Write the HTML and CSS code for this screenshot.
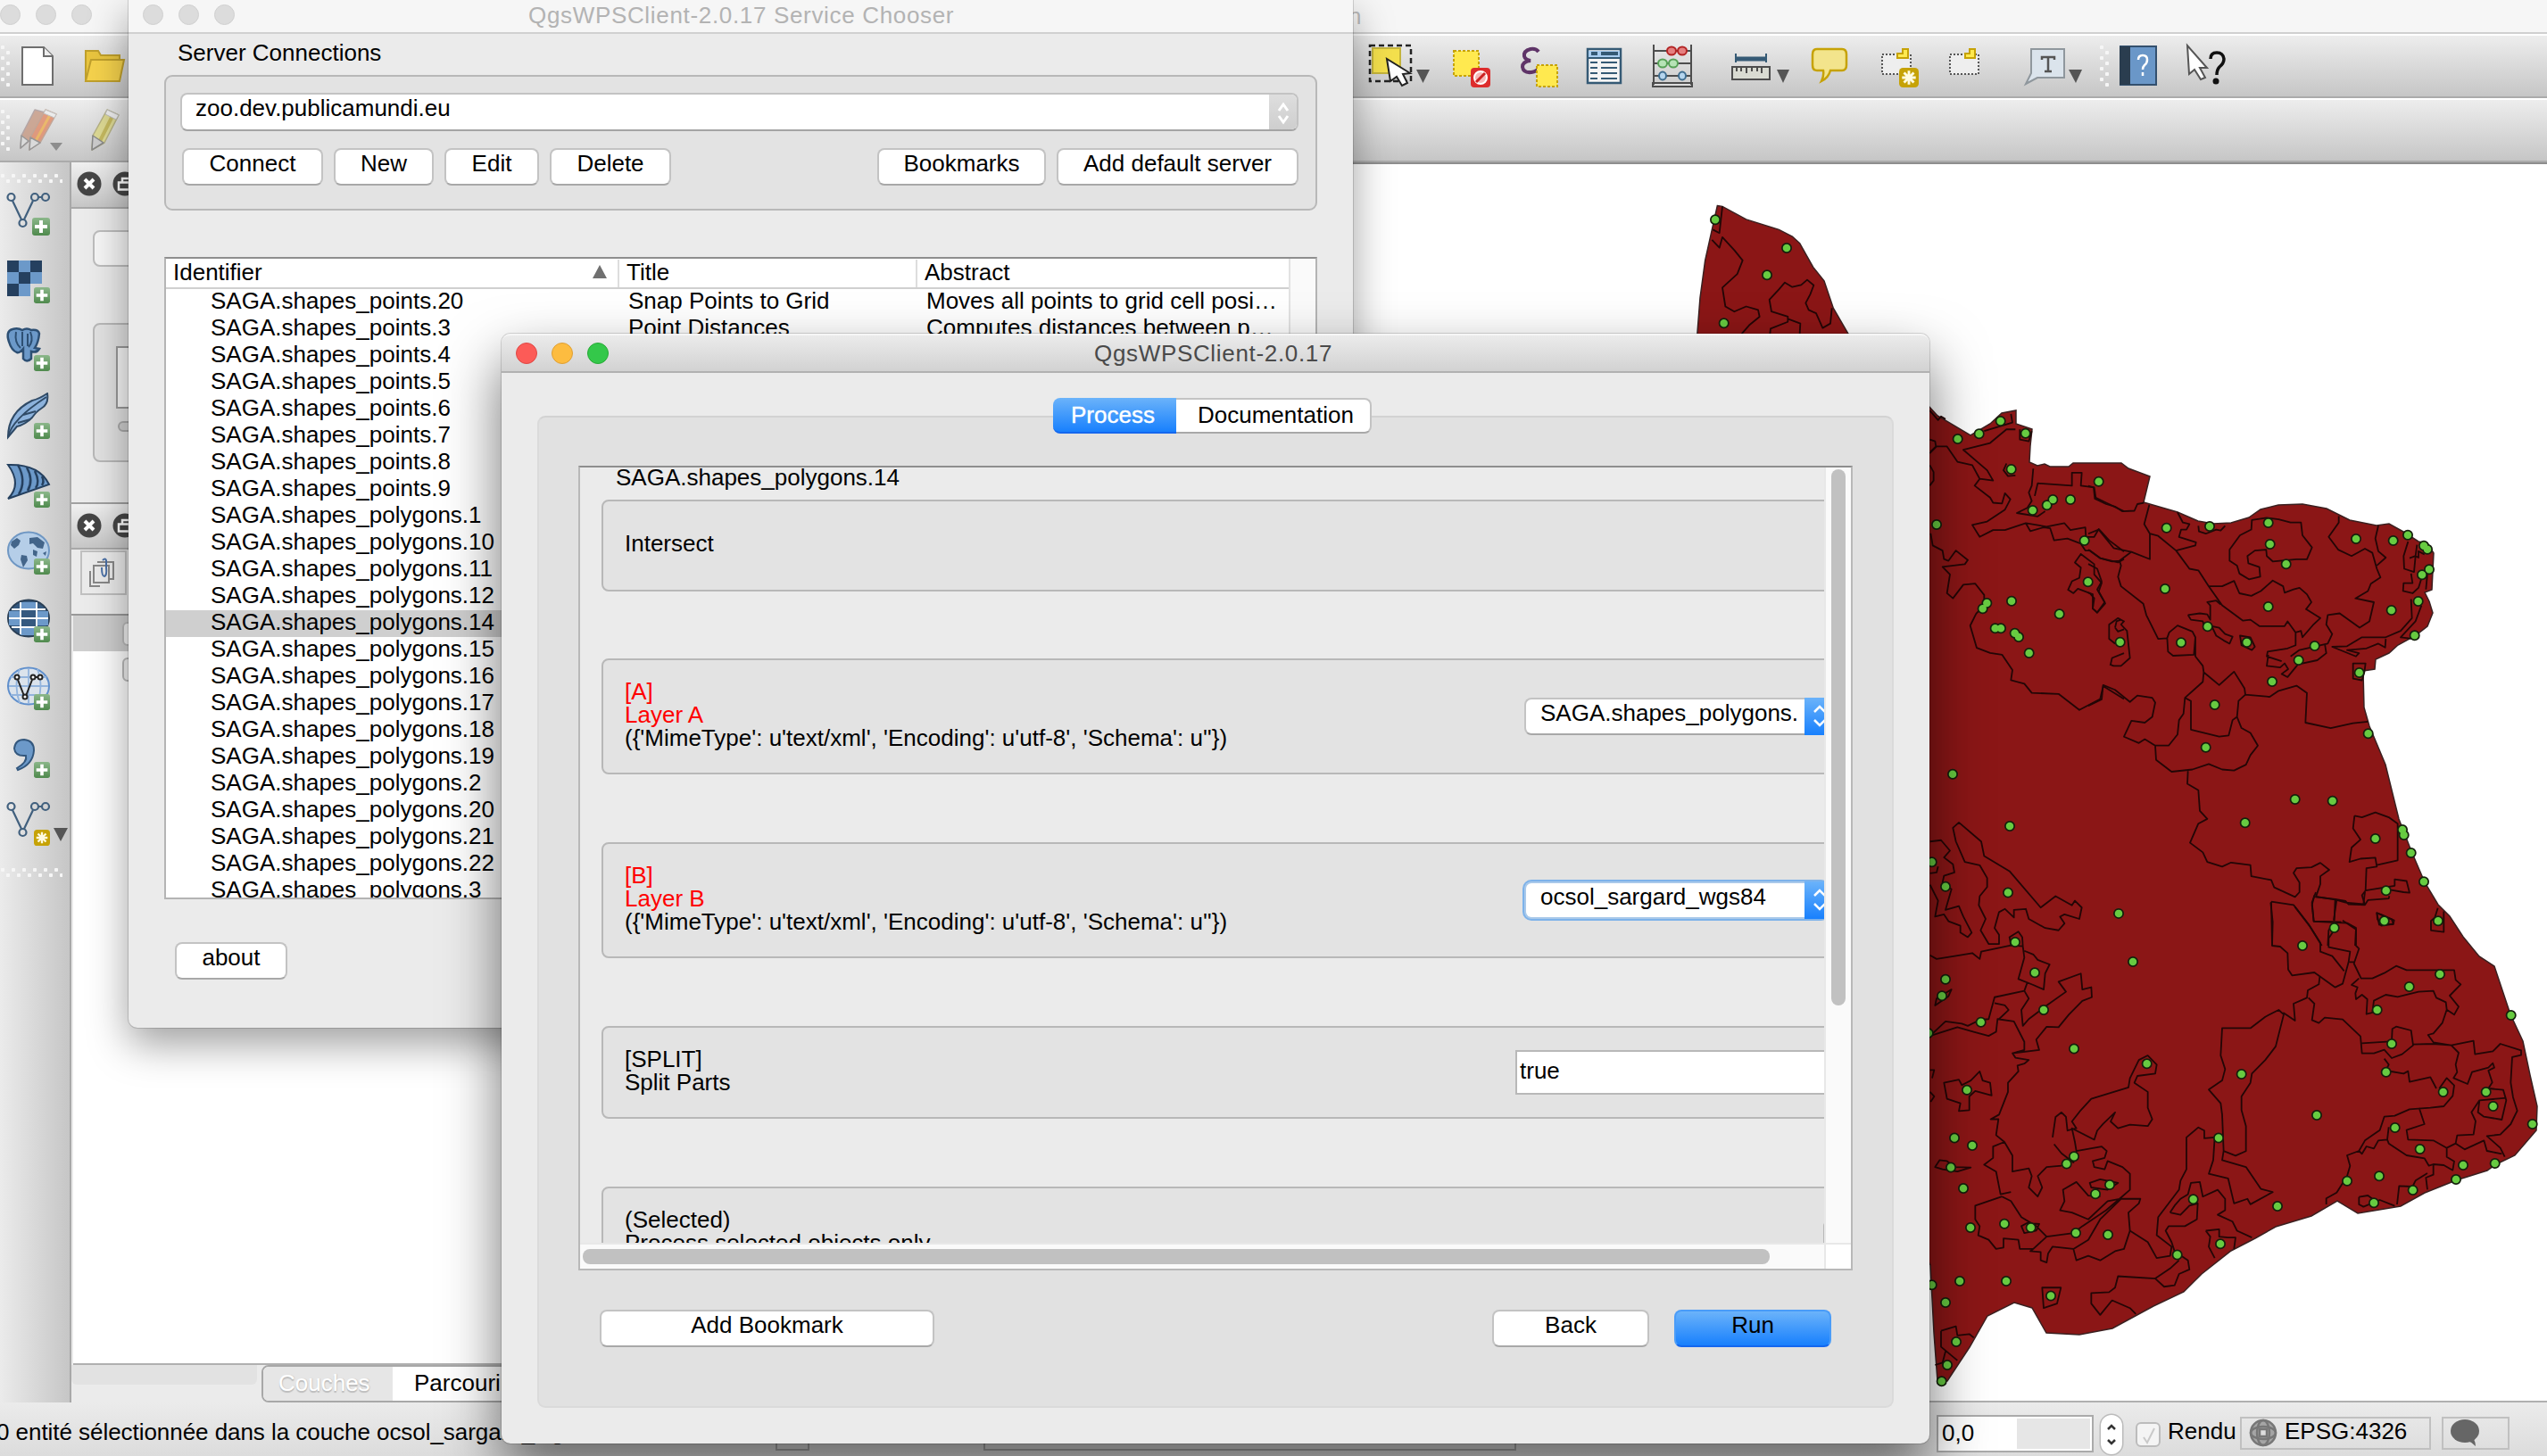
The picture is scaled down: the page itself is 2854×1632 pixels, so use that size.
FILE: index.html
```
<!DOCTYPE html>
<html lang="fr">
<head>
<meta charset="utf-8">
<title>QGIS - QgsWPSClient</title>
<link rel="stylesheet" href="styles.css">
</head>
<body>
<svg class="defs" width="0" height="0">
  <defs>
    <linearGradient id="green" x1="0" y1="0" x2="0" y2="1"><stop offset="0" stop-color="#8bb78a"/><stop offset="1" stop-color="#4f8a4d"/></linearGradient>
    <symbol id="plus" viewBox="0 0 20 20"><rect width="20" height="20" rx="3" fill="url(#green)"/><path d="M10 3v14M3 10h14" stroke="#fff" stroke-width="4"/></symbol>
    <symbol id="star" viewBox="0 0 20 20"><rect width="20" height="20" rx="4" fill="#c6a206"/><path d="M10 3v14M3 10h14M5 5l10 10M15 5l-10 10" stroke="#fffbe0" stroke-width="2.6"/></symbol>
    <symbol id="vee" viewBox="0 0 60 50"><g fill="none" stroke="#41607e" stroke-width="2.2"><circle cx="12.5" cy="9" r="4"/><circle cx="39" cy="9" r="4"/><circle cx="51" cy="9" r="4"/><circle cx="25.500" cy="38" r="4"/><path d="M14 13l10 21M37 13l-10 21M43 9h4"/></g></symbol>
    <symbol id="close" viewBox="0 0 28 28"><circle cx="14" cy="14" r="13.500" fill="#454545"/><path d="M9 9l10 10M19 9l-10 10" stroke="#fff" stroke-width="4"/></symbol>
    <symbol id="float" viewBox="0 0 28 28"><circle cx="14" cy="14" r="13.500" fill="#454545"/><path d="M7 12.500h12v8H7zM11 12V8h10" fill="none" stroke="#fff" stroke-width="2.500"/></symbol>
  </defs>
</svg>

<div class="desktop">
<main class="qgis">
  <header class="titlebar main-title">
    <div class="lights"><i></i><i></i><i></i></div>
    <span class="title">n</span>
  </header>

  <div class="toolbar">
    <span class="grip"></span>
    <svg width="132" height="68" viewBox="12 40 132 68">
      <path d="M25 53h24l10 10v32H25z" fill="#fff" stroke="#6e6e6e" stroke-width="2"/><path d="M49 53v10h10" fill="#eee" stroke="#6e6e6e" stroke-width="2"/>
      <path d="M96 91V57h14l3 5h21v6" fill="#e9c53f" stroke="#c0a02c" stroke-width="2"/><path d="M96 91l6-24h37l-5 24z" fill="#f5d24c" stroke="#c0a02c" stroke-width="2"/>
    </svg>
    <span class="spacer"></span>
    <svg width="80" height="68" viewBox="1530 40 80 68">
      <rect x="1535" y="51" width="46" height="40" fill="none" stroke="#222" stroke-width="2.500" stroke-dasharray="6 4"/><rect x="1538" y="54" width="31" height="28" fill="#f4e04d" stroke="#c4b43c" stroke-width="2"/>
      <path d="M1554 66l4 25 7-5 6 10 6-3-5-10 8-1z" fill="#fff" stroke="#222" stroke-width="2"/><path d="M1587 78h15l-7.500 15z" fill="#555"/>
    </svg>
    <svg width="80" height="68" viewBox="1610 40 80 68">
      <rect x="1629" y="57" width="28" height="28" fill="#ffe94f" stroke="#c6a206" stroke-width="2" stroke-dasharray="3 2"/>
      <rect x="1648" y="76" width="22" height="22" rx="4" fill="#dd2c2c"/><circle cx="1659" cy="87" r="7" fill="#f6b8b8" stroke="#fff" stroke-width="2"/><path d="M1654 92l10-10" stroke="#c22" stroke-width="3"/>
    </svg>
    <svg width="76" height="68" viewBox="1690 40 76 68">
      <path d="M1724 58q-3-4-9-3-8 2-7 8 1 4 7 5-9 1-9 7 1 7 10 6 6-1 9-5" fill="none" stroke="#5f3468" stroke-width="4"/>
      <rect x="1722" y="73" width="23" height="24" fill="#ffe94f" stroke="#c6a206" stroke-width="2" stroke-dasharray="3 2"/>
    </svg>
    <svg width="68" height="68" viewBox="1766 40 68 68">
      <rect x="1779" y="55" width="37" height="38" fill="#f4f4f4" stroke="#355a75" stroke-width="2.500"/><path d="M1780 57h35v7h-35z" fill="#a9cdf0"/><path d="M1783 60h7M1794 60h19" stroke="#355a75" stroke-width="4"/>
      <path d="M1779 65h37" stroke="#355a75" stroke-width="2"/><path d="M1782 70h8m4 0h18M1782 76h8m4 0h18M1782 82h8m4 0h18M1782 88h8m4 0h18" stroke="#355a75" stroke-width="2"/>
    </svg>
    <svg width="86" height="68" viewBox="1834 40 86 68">
      <path d="M1853 50v45M1895 50v45M1853 57h42M1853 71h42M1853 85h42M1852 93h44v4h-44z" fill="#ddd" stroke="#4d4d4d" stroke-width="2"/>
      <g stroke-width="2"><g fill="#e58080" stroke="#b32424"><ellipse cx="1873" cy="57" rx="5" ry="4.500"/><ellipse cx="1885" cy="57" rx="5" ry="4.500"/></g><g fill="#b6e3b6" stroke="#57a157"><ellipse cx="1863" cy="71" rx="5" ry="4.500"/><ellipse cx="1875" cy="71" rx="5" ry="4.500"/></g><g fill="#b5d5ee" stroke="#3f6d8f"><ellipse cx="1863" cy="85" rx="4" ry="4.500"/><ellipse cx="1885" cy="85" rx="4" ry="4.500"/></g></g>
    </svg>
    <svg width="98" height="68" viewBox="1920 40 98 68">
      <path d="M1945 60v10M1979 60v10" stroke="#355a75" stroke-width="2"/><path d="M1945 66h34" stroke="#355a75" stroke-width="5"/>
      <rect x="1941" y="75" width="42" height="14" fill="#d9dbd2" stroke="#4d4d4d" stroke-width="2"/><path d="M1946 75v5m5-5v5m6-5v7m6-7v5m6-5v5m5-5v7" stroke="#4d4d4d" stroke-width="2"/><path d="M1991 78h14l-7 15z" fill="#555"/>
    </svg>
    <svg width="76" height="68" viewBox="2018 40 76 68">
      <path d="M2036 55h28q5 0 5 6v12q0 6-5 6h-13q-2 8-10 12 3-6 2-12h-7q-5 0-5-6V61q0-6 5-6z" fill="#f3e48c" stroke="#c6a206" stroke-width="2.500"/>
    </svg>
    <svg width="74" height="68" viewBox="2094 40 74 68">
      <rect x="2109" y="61" width="32" height="22" fill="#eee" stroke="#555" stroke-width="2" stroke-dasharray="2 2"/><path d="M2132 55h6v10h-12v-5h6z" fill="#ffe94f" stroke="#c6a206" stroke-width="2"/>
      <use href="#star" x="2128" y="76" width="22" height="22"/>
    </svg>
    <svg width="84" height="68" viewBox="2168 40 84 68">
      <rect x="2185" y="61" width="32" height="22" fill="#eee" stroke="#555" stroke-width="2" stroke-dasharray="2 2"/><path d="M2207 55h6v10h-11v-5h5z" fill="#ffe94f" stroke="#c6a206" stroke-width="2"/>
    </svg>
    <svg width="98" height="68" viewBox="2252 40 98 68">
      <path d="M2276 55h37v32h-30l-13 7 6-12z" fill="#dbe4ec" stroke="#8f979d" stroke-width="2"/><path d="M2288 67v-3h14v3M2295 64v15M2291 80h8" fill="none" stroke="#555" stroke-width="2.500"/><path d="M2318 78h15l-7 15z" fill="#555"/>
    </svg>
    <span class="grip inner"></span>
    <svg width="76" height="68" viewBox="2366 40 76 68">
      <path d="M2376 52h40v43h-40z" fill="#6a97c8" stroke="#33506e" stroke-width="2"/><path d="M2375 52h12v43h-12z" fill="#2a3d4f"/><path d="M2396 67q0-5 5-5t5 5q0 4-3 6-2 2-2 5M2401 81v4" fill="none" stroke="#fff" stroke-width="2.500"/>
    </svg>
    <svg width="412" height="68" viewBox="2442 40 412 68">
      <path d="M2451 51l2 32 6-5 7 11 5-2-6-11h8z" fill="#fff" stroke="#555" stroke-width="2"/><path d="M2477 66q0-7 7-7t8 7q0 5-5 9-3 3-3 9" fill="none" stroke="#111" stroke-width="3.500"/><circle cx="2483" cy="91" r="3.500" fill="#111"/>
    </svg>
  </div>

  <div class="toolbar second">
    <span class="grip"></span>
    <svg width="132" height="68" viewBox="12 112 132 68" stroke-linejoin="round">
      <g opacity=".8"><path d="M39 123l11 3-17 32-10 8 1-14z" fill="#c79a84" stroke="#a99" stroke-width="1.500"/><path d="M51 123l12 5-18 32-12 8 1-14z" fill="#e08a68" stroke="#b98" stroke-width="1.500"/><path d="M57 127l-17 31" stroke="#edb050" stroke-width="3"/><path d="M34 154l11 6-12 8zM24 152l8 6-9 8z" fill="#ddd" stroke="#888" stroke-width="1.500"/><path d="M51 123l12 5-2 4-12-5z" fill="#eee" stroke="#bbb"/></g>
      <path d="M56 160h14l-7 9z" fill="#8d8d8d"/>
      <path d="M120 123l13 6-16 31-14 8 1-16z" fill="#ddd994" stroke="#b5b184" stroke-width="1.500"/><path d="M126 130l-14 28" stroke="#c5b95f" stroke-width="4"/><path d="M104 152l12 8-13 8z" fill="#ccc" stroke="#888" stroke-width="1.500"/><path d="M120 123l13 6-3 5-12-6z" fill="#eee" stroke="#bbb"/>
    </svg>
  </div>

  <div class="workspace">
    <aside class="layerbar">
      <span class="hgrip"></span>
      <svg width="78" height="76" viewBox="0 0 78 76"><use href="#vee" width="60" height="50"/><use href="#plus" x="36" y="32" width="20" height="20"/></svg>
      <svg width="78" height="76" viewBox="0 0 78 76"><rect x="8" y="4" width="39" height="26" fill="#6c99c9"/><path d="M8 30h26v14H8z" fill="#6c99c9"/><path d="M8 4h13v13H8zM34 4h13v13H34zM21 17h13v13H21zM8 30h13v14H8z" fill="#25405f"/><use href="#plus" x="38" y="34" width="18" height="18"/></svg>
      <svg width="78" height="76" viewBox="0 0 78 76"><path d="M14 5q6-2 11 1 5-3 10 0 8-1 9 4-1 10-5 16l5 1q-3 5-9 3v8q-5 5-9 0V27q-4 5-7 4-6-2-9-12-4-12 4-14z" fill="#6c99c9" stroke="#2d4f73" stroke-width="2.500"/><path d="M18 8q-2 12 5 18M34 8q4 10-2 17M25 8v16M31 10v14" fill="none" stroke="#2d4f73" stroke-width="2"/><use href="#plus" x="38" y="34" width="18" height="18"/></svg>
      <svg width="78" height="76" viewBox="0 0 78 76"><path d="M9 50q0-28 27-41 8-2 17-8 2 12-7 17-5 3-10 10-8 8-17 10z" fill="#8cb2dc" stroke="#2f4a66" stroke-width="2"/><path d="M9 50q4-20 43-45M20 34l14-4M26 25l14-4" fill="none" stroke="#2f4a66" stroke-width="2"/><use href="#plus" x="38" y="34" width="18" height="18"/></svg>
      <svg width="78" height="76" viewBox="0 0 78 76"><path d="M9 5q35-1 46 22L9 43q16-16 0-38z" fill="#6c99c9" stroke="#25405f" stroke-width="2"/><path d="M20 5q10 18 1 33M30 8q8 14 1 26M39 12q6 12 1 19M47 18q3 6 0 10" fill="none" stroke="#25405f" stroke-width="2.500"/><use href="#plus" x="38" y="35" width="18" height="18"/></svg>
      <svg width="78" height="76" viewBox="0 0 78 76"><ellipse cx="32" cy="25" rx="23" ry="20.500" fill="#b5cee8" stroke="#6f97c3" stroke-width="2"/><path d="M13 15l6-4 4 3-2 5-5 4-4-4zM24 30l6 1 1 5-5 8-3-9zM33 11l9-1 8 6-2 7-6-1-5-5-4 1zM37 24l5 2-1 6-4-2zM27 8l-4 4M48 28l4-2-1 5z" fill="#43658a"/><use href="#plus" x="38" y="34" width="18" height="18"/></svg>
      <svg width="78" height="76" viewBox="0 0 78 76"><ellipse cx="32" cy="25" rx="23" ry="20.500" fill="#35597f" stroke="#2a3f55" stroke-width="2"/><path d="M23 15h18v-8H23zM10 17h12v16H10zM42 17h12v16H42zM23 35h18v9H23z" fill="#6c99c9"/><path d="M13 15h38M10 25h44M13 35h38M23 7v36M41 7v36" stroke="#fff" stroke-width="1.800"/><use href="#plus" x="38" y="34" width="18" height="18"/></svg>
      <svg width="78" height="76" viewBox="0 0 78 76"><ellipse cx="32" cy="25" rx="23" ry="20.500" fill="#dbe3ec" stroke="#5f8fcc" stroke-width="2"/><path d="M12 15h40M10 25h44M12 35h40M32 5v40M22 6q-7 19 0 38M42 6q7 19 0 38" fill="none" stroke="#93b4dd" stroke-width="1.800"/><g fill="#fff" stroke="#222" stroke-width="2"><path d="M20 18l7 18M36 18l-7 18M39 15h4"/><circle cx="19" cy="15" r="2.500"/><circle cx="37" cy="15" r="2.500"/><circle cx="45" cy="15" r="2.500"/><circle cx="28" cy="37" r="2.500"/></g><use href="#plus" x="38" y="34" width="18" height="18"/></svg>
      <svg width="78" height="76" viewBox="0 0 78 76"><path d="M19 41q12-7 10-14-12 1-13-8 1-10 11-10 11 1 11 12-1 16-18 22z" fill="#6c99c9" stroke="#33577d" stroke-width="2"/><use href="#plus" x="38" y="34" width="18" height="18"/></svg>
      <svg width="78" height="76" viewBox="0 0 78 76"><use href="#vee" y="-1" width="60" height="50"/><use href="#star" x="38" y="34" width="18" height="18"/><path d="M60 32h16l-8 15z" fill="#555"/></svg>
      <span class="hgrip"></span>
    </aside>

    <section class="docks">
      <div class="dock-head"><svg width="28" height="28"><use href="#close"/></svg><svg width="28" height="28"><use href="#float"/></svg></div>
      <div class="dock-one"><div class="stub-btn"></div><div class="stub-group"><div class="stub-list"></div><div class="stub-scroll"></div></div></div>
      <div class="dock-head two"><svg width="28" height="28"><use href="#close"/></svg><svg width="28" height="28"><use href="#float"/></svg></div>
      <div class="dock-tools"><div class="toolbtn"><svg width="30" height="34" viewBox="0 0 30 34" fill="none" stroke="#888" stroke-width="2"><path d="M2 15v17h11M6 9h17v19H6zM10 5h18v19h-4"/><path d="M15 11q0 10 3 10 3-1 2-10V3q-1-3-4 0" stroke="#4a6fa5"/></svg></div></div>
      <div class="layers"><div class="layer picked"><i></i></div><div class="layer"><i></i></div></div>
      <div class="dock-tabs"><div class="frame"></div><div class="segment"><span class="off">Couches</span><span>Parcourir</span></div></div>
    </section>

    <section class="canvas">
      <svg width="2134" height="1386" viewBox="720 184 2134 1386">
        <path class="land" d="M2100 420L2162 456L2171 466L2208 488L2230 475L2243 463L2259 460L2259 475L2277 481L2275 500L2274 518L2283 522L2291 520L2297 523L2318 523L2323 519L2377 519L2385 525L2409 534L2402 563L2440 574L2463 584L2480 587L2500 586L2520 580L2533 571L2553 566L2580 565L2607 570L2633 583L2663 589L2677 587L2693 596L2710 607L2720 609L2727 620L2725 661L2717 664L2722 674L2726 687L2720 702L2707 712L2687 723L2677 732L2662 739L2661 750L2648 752L2649 793L2655 814L2673 857L2688 918L2702 954L2717 989L2732 1014L2745 1027L2760 1050L2778 1072L2795 1083L2813 1137L2827 1167L2835 1205L2843 1240L2842 1267L2818 1295L2797 1305L2787 1312L2752 1323L2717 1337L2690 1352L2642 1360L2619 1346L2590 1363L2550 1375L2527 1388L2500 1402L2467 1428L2447 1448L2413 1464L2367 1489L2330 1496L2293 1494L2277 1466L2257 1460L2227 1475L2207 1510L2182 1548L2171 1548L2167 1494L2163 1418L2100 1300Z"/>
        <g transform="translate(1880 200) scale(.33333 .38265)">
          <path class="land" d="M133 80L150 82L230 120L340 150L385 170L410 190L455 260L492 300L523 380L573 455L573 500L63 500L66 450L75 350L92 240L115 150Z"/>
          <path class="line" d="M150 82L140 160L118 150M115 180L140 203L150 172L190 210L218 240L200 280L150 320L160 375L190 390L230 375L270 385L275 405L240 430L215 455M310 455L312 440L370 420L370 405L315 390L308 355L340 325L360 305L385 318L415 312L435 297L457 313L445 340L430 365L440 385L465 395L487 438L513 425L518 380M372 412L412 425L410 455"/>
          <path class="line" d="M847 680L875 708L885 697L900 705M847 765L865 770L868 785L850 800M847 805L870 785L905 785L940 830L990 840L1015 880L1060 885L1040 855L960 795L1050 775L1105 735L1135 735M1030 740L1125 715L1120 690M1150 735L1150 765L1180 770L1190 740M1015 880L998 900L1050 935L1060 950L1090 952L1100 922L1118 940L1100 970L1040 1005L990 1015L1015 1050L1060 1030L1100 1030L1170 1010L1240 1020L1300 1010L1320 1030L1370 1022L1372 1050M1170 1010L1185 1033L1230 1022L1252 1025L1265 1060L1310 1055L1355 1070L1370 1090L1385 1090L1420 1112L1480 1125L1500 1115M1195 850L1190 900L1180 920L1190 945L1175 965L1140 980L1210 990L1235 975M1200 930L1210 893L1325 900L1325 862L1358 862L1355 900L1400 905L1405 935L1440 950L1500 975M1370 1050L1400 1050L1415 1027L1450 1060L1500 1093M1355 1100L1335 1125L1355 1140L1350 1170L1325 1180L1312 1205L1330 1215L1345 1202L1385 1215L1400 1230L1395 1260L1410 1272L1437 1245L1415 1210L1425 1185L1400 1160L1400 1130ZM1105 835L1095 855L1110 872L1135 870M847 840L860 860L860 885L847 900M850 1040L857 1075L890 1090L895 1115L910 1120L935 1090L975 1118L965 1130L890 1138L915 1160L905 1215L925 1230L960 1190L1000 1187L1030 1220L1030 1250L1003 1275L983 1310L1005 1375L1050 1390L1090 1395L1125 1440L1120 1470L1165 1480L1190 1507L1280 1510L1350 1557L1420 1525L1430 1487L1500 1525"/>
        </g>
        <g transform="translate(2340 500) scale(.33333 .35714)">
          <path class="line" d="M0 125L18 130L22 165L60 182L90 190L115 205L155 203L165 182L187 178M205 185L188 245L207 275L207 355L145 332L105 360L110 375L100 410L110 440L185 495L195 530L235 605L265 603L272 585L300 563L350 582L360 600L355 655L285 658L268 645L265 600M300 208L318 240L340 245L330 262L312 262L305 285L362 302L360 312L295 328M207 275L235 282L295 328L340 385L370 390L405 440L450 500L520 548L545 545L575 565L660 565L670 550L697 585L697 625L670 635L603 645L600 660L650 675M0 275L35 262L85 320L145 332M0 325L40 352L80 362L105 360M370 250L372 268L395 275L430 262L445 265L460 250M405 440L450 440L490 423L508 462L548 470L580 455L620 422L655 440L660 460L690 450L710 445L735 465L750 490L732 512L780 540L755 562L720 600L715 580L697 585M550 232L548 262L510 280L475 325L475 360L500 375L508 400L540 418L578 410L575 380L538 368L535 345L560 328L598 325L600 345L620 362L700 355L735 355L752 318L720 280L715 240L680 240L640 230L600 225ZM842 220L842 240L808 285L840 325L885 345L930 322L955 335L970 385L982 412L950 432L940 455L898 478L960 490L945 550L912 570L845 525L805 530L800 560L820 590L805 620L710 640L680 660M975 250L965 290L975 330L1000 350L970 375M1075 300L1060 345L1062 385L1095 395L1100 345L1110 350L1110 330L1130 340M1085 400L1090 430L1060 430L1058 455L1090 462L1110 445L1120 415M1140 400L1135 450M1105 310L1100 345L1080 352M1085 480L1088 540L1050 580L1000 600L960 600L920 600L870 628L820 630L900 660L910 650L870 640L935 635L975 620L998 632L1000 605M1120 500L1100 550L1050 600L1095 605M605 655L600 690L645 695L660 682L672 700L650 715L670 725L705 685L770 672L800 650L795 620M335 530L345 545L385 550L390 565M335 530L375 525L400 528L410 545L410 500L400 490L430 485L445 497M415 565L430 595L455 610L475 620L485 598L460 590L440 570ZM510 595L515 625L550 640L560 630L545 600ZM360 600L360 660L385 690L388 710L440 750L490 708L525 760L528 780L505 800L500 850L515 885L545 900L570 940L545 970L530 1000L490 1018L450 1015L405 998L350 1015L280 1022L228 985L225 940L270 940L300 905L305 860L320 840L325 790L345 800L345 890L440 912L472 908L485 860L500 850M388 710L385 740L325 790M528 780L610 787L640 768L700 752L735 775L730 868L815 885L890 870L940 865M0 815L45 795L50 750L90 765L140 803L165 783L215 790L225 805L215 850L190 868L145 862L120 912L170 932L190 920L225 940M335 1020L333 1060L370 1080L375 1145L400 1170L370 1185L342 1245L385 1275L400 1305L450 1320L480 1307L545 1315L548 1350L615 1362L625 1385L695 1415L710 1400L710 1370L690 1340L700 1325L750 1322L780 1308L810 1330L780 1350L780 1375L765 1415L830 1422L865 1428L875 1438L930 1440L940 1425L1010 1420L1012 1412M895 1160L890 1200L915 1235L885 1260L878 1305L915 1295L965 1292L970 1320L935 1325L932 1395L920 1410L930 1440M895 1160L920 1165L965 1150L1010 1165L1040 1185L1040 1300L970 1315M932 1395L1030 1380L1030 1360L1070 1365L1080 1402L1060 1400L1010 1392M760 1410L752 1440L758 1492L870 1497L900 1512L897 1568M830 1422L827 1490M805 1568L808 1520L820 1500M615 1430L618 1568M615 1430L690 1440L740 1500L785 1568M970 1465L972 1485L985 1505L1025 1500L1020 1485L1005 1480ZM890 682H932L928 710L920 735L890 730ZM72 685L85 690L110 690L140 665L130 580L110 560L120 550L100 540L70 560L70 605L90 620M75 685L80 665L120 650M90 570L100 582L120 575M90 570L95 550L110 545M0 370L30 385L45 425L30 450L55 490L30 522L15 510L15 465L0 460M1175 1450L1165 1480L1152 1490L1152 1520L1195 1525L1195 1460"/>
        </g>
        <g transform="translate(2140 780) scale(.33333 .5102)">
          <path class="line" d="M68 320L105 317L135 340L115 355L145 370L150 388L115 395L110 410L140 425L120 470L165 462L180 485L208 520L195 530L170 520L170 505L130 495L115 480L85 485L95 450L68 415M68 390L90 388L95 375M145 290L165 278L240 320L250 352L335 385L440 465L490 440L545 460L555 450L578 465L570 490L520 480L505 485L520 500L500 515L455 510L400 490L390 468L350 470L350 487L320 468L300 475L285 510L300 525L300 545L265 545L238 515L255 490L232 460L235 440L260 420L260 400L235 372L185 365L155 320ZM68 570L90 578L165 570L210 565L235 578L240 562L340 548L335 530L365 518L378 530L380 550L340 548M380 550L385 575L365 622L415 635L450 645L455 610L470 590L430 580L415 568L385 560M68 747L120 715L175 720L195 725L235 712L265 710L285 662L385 648L400 665L375 690L380 725L400 710L460 680L525 650L500 628L575 610L580 645L610 640L612 662L580 670L535 700L500 728L460 727L425 755L435 778L345 785L385 778L385 760L350 715L295 710L290 738L265 747L215 738L160 728L68 747M285 675L320 680L332 690L300 710M385 648L395 630M345 785L355 795L400 800L385 808L362 812L365 825L330 850L330 870L300 920L272 930L298 930L290 965L318 980L280 990L280 1015L250 1030L290 1045L305 1095L340 1090M318 980L345 1010L345 1045L400 1038L410 1055L400 1080L430 1100L445 1080L430 1055L460 1035L510 1032M115 850L165 843L175 855L205 845L235 825L245 845L270 850L275 878L220 868L200 880L200 910L165 912L170 895L125 885ZM68 822L82 822L75 840M68 870L82 880L70 892M85 1035L100 1020L125 1022L150 1035L205 1036L160 1045L110 1040ZM85 680L90 665L140 645L130 660ZM480 970L490 925L510 915L525 925L530 955L560 950L545 935L575 910L610 885L735 860L740 840L770 800L800 790L830 810L825 830L765 835L755 850L800 870L800 905L815 930L800 945L740 942L700 950L675 935L690 915L650 940L630 955L620 975L545 950L555 980L560 1000L550 1025L510 1005L485 985M560 1000L645 990L662 1000L655 1015L615 1022L620 1035L655 1040L665 1022L715 1035L740 1050L740 1085L705 1105L665 1110L600 1150L545 1135L505 1130L520 1110L515 1085L560 1068L600 1098L640 1100M605 1070L640 1062L700 1070L665 1085L610 1080ZM310 1100L220 1120L220 1150L235 1165L230 1185L265 1195L290 1215L315 1212L315 1192L365 1195L370 1215L415 1215L460 1188L550 1180L580 1165L660 1130L705 1105L775 1105L770 1115L735 1135L740 1175L720 1215L690 1220L640 1240L600 1230L560 1240L550 1215L480 1210L465 1225L460 1245L440 1240L440 1222L405 1220L415 1215M310 1100L340 1110L375 1145L425 1165L460 1188M375 1165L385 1180L425 1175L435 1160L395 1158ZM550 1215L600 1195L640 1150L710 1105M740 1175L800 1200L830 1235L875 1230L880 1210L830 1185L835 1145L905 1085L910 1065L930 1040L930 970L970 948L990 955L990 972L1025 970M1050 920L1045 895L1005 865L1050 845L1060 820L1045 790L1050 730L1145 730L1195 705L1240 690L1257 700L1230 770L1195 800L1150 830L1145 850L1115 880L1115 910L1130 945L1130 1000L1095 1010L1055 1000L1050 920M1025 970L1020 1020L1005 1050L1070 1060L1090 1115L1135 1105L1145 1117L1220 1090L1180 1083L1130 1035L1050 1020L1055 1000M875 1135L890 1120L910 1105L935 1095L945 1070L975 1068L985 1100L1035 1085L1060 1105L1060 1130L1035 1140L1085 1155L1100 1175L1150 1190M875 1135L910 1140L940 1120L968 1115L965 1150L925 1165L870 1165L860 1175L880 1200L890 1220L935 1240L940 1260L905 1270L890 1295L855 1298L825 1280L700 1275L690 1300L670 1310L610 1312L610 1335L640 1360L680 1328L740 1345L760 1358M995 1175L1010 1188L1005 1210L1025 1235M995 1175L1040 1172L1040 1188L1070 1190L1095 1190L1090 1215M825 1280L875 1258L905 1240M445 1300L450 1345L495 1335L508 1300ZM105 1395L155 1385L160 1405L200 1402L215 1410M105 1395L105 1430L160 1460M85 1470L110 1465L120 1440"/>
        </g>
        <g transform="translate(2500 1000) scale(.33333)">
          <path class="line" d="M133 35L140 100L138 180L165 183L190 205L192 260L205 280L280 270L350 320L375 308L395 235L400 200L328 185L328 155L345 130M215 50L265 115L300 170L300 200L340 215L380 265M375 95L420 125L420 180L430 190L413 240L437 290L475 290L515 272L555 248L590 262L680 262L750 262L755 295L772 310L735 348L765 385L750 412L725 395L722 370L690 355L680 332L630 335L560 352L520 345L480 365L475 405L455 410L458 360L440 345L420 360L418 340L425 320L405 312L430 290M398 235L415 235M298 285L295 310L258 330L255 355L210 375L215 432L175 405M260 355L280 375L272 430L295 440L315 422L375 428L435 485L440 542L480 542L515 530L540 558L575 545L612 515L605 465L555 452L542 460L540 500M440 508L535 502M612 512L680 510L740 515L815 500L820 545L880 535L905 510L975 532L975 548L945 555L940 640L948 690L962 735L940 780L905 815L860 820L905 860L920 890M725 395L710 440L680 475L662 480L680 505L740 515L765 540L755 580L760 605L748 625L795 645L810 605L865 590L880 575L885 590L865 600L878 640L865 660M515 560L530 580L520 600L580 610L595 602L600 638L670 622L690 660M700 660L725 625L750 650L745 685L715 720L670 725L600 730L550 752L515 755L500 800L450 835L430 870L440 880L455 855L480 862L495 835L525 832L530 790M632 725L650 780L590 800L595 832L680 835L725 860L725 890L750 905L745 935L715 918L680 915L665 920L650 895L590 885L530 845L525 832M725 860L755 845L760 818L815 815L822 770L808 740L835 700L830 740L850 755L910 765L925 700L915 665L865 660M835 700L925 692M755 845L785 865L850 835L860 870L910 880M430 870L390 885L400 920L390 955L355 1010L320 1030L320 1050M680 915L680 950L655 960L660 1000M660 945L620 970L610 990L565 988L558 1050M430 1025L430 1050L445 1058L500 1035L550 1055M430 1025L460 1020L480 1035"/>
          <path class="line" d="M285 0L272 35L278 98L370 100M285 15L350 25L385 35L445 40L450 0M355 25L345 95M490 70L498 110L545 108L548 95L505 75Z"/>
        </g>
        <g transform="translate(1880 200) scale(.33333 .38265)"><g class="ring"><path id="d1" d="M126 121h.1M366 204h.1M300 283h.1M155 424h.1M941 763h.1M1013 748h.1M1085 711h.1M1169 747h.1M1121 852h.1M1193 972h.1M1241 957h.1M1261 941h.1M1320 941h.1M1415 888h.1M870 1014h.1M1367 1061h.1M1379 1182h.1M1025 1260h.1M1039 1244h.1M1122 1238h.1M1283 1276h.1M1067 1318h.1M1086 1318h.1M1133 1332h.1M1146 1343h.1M1181 1390h.1M1487 1358h.1"/></g><use href="#d1" class="dot"/></g>
        <g transform="translate(2340 500) scale(.33333 .35714)"><g class="ring"><path id="d2" d="M263 257h.1M408 252h.1M605 241h.1M611 308h.1M665 370h.1M258 448h.1M605 504h.1M401 566h.1M312 617h.1M533 616h.1M761 627h.1M707 672h.1M618 739h.1M425 812h.1M395 946h.1M900 291h.1M1025 297h.1M1074 279h.1M1140 324h.1M1128 313h.1M1146 387h.1M1122 404h.1M1109 487h.1M1019 515h.1M1097 594h.1M911 711h.1M941 902h.1M695 1109h.1M821 1114h.1M527 1182h.1M965 1232h.1M1061 1221h.1M1056 1204h.1M1085 1277h.1M1128 1367h.1M1001 1395h.1M995 1490h.1M1176 1490h.1M827 1512h.1"/></g><use href="#d2" class="dot"/></g>
        <g transform="translate(2140 780) scale(.33333 .5102)"><g class="ring"><path id="d3" d="M144 172h.1M336 286h.1M74 365h.1M120 419h.1M330 432h.1M702 478h.1M354 541h.1M750 584h.1M120 623h.1M108 659h.1M420 608h.1M450 690h.1M239 717h.1M62 741h.1M552 775h.1M797 808h.1M192 866h.1M150 971h.1M210 988h.1M138 1036h.1M180 1082h.1M552 1012h.1M527 1028h.1M672 1074h.1M624 1094h.1M204 1168h.1M318 1160h.1M407 1168h.1M558 1180h.1M666 1184h.1M168 1286h.1M324 1286h.1M74 1294h.1M120 1333h.1M474 1318h.1M156 1419h.1M126 1470h.1M107 1506h.1M1115 831h.1M1038 971h.1M953 1106h.1M1044 1204h.1M899 1228h.1M1236 1121h.1"/></g><use href="#d3" class="dot"/></g>
        <g transform="translate(2500 1000) scale(.33333)"><g class="ring"><path id="d4" d="M240 180h.1M702 276h.1M599 318h.1M491 396h.1M941 414h.1M540 510h.1M521 605h.1M713 672h.1M857 672h.1M881 720h.1M288 750h.1M551 792h.1M1013 780h.1M635 864h.1M780 918h.1M887 912h.1M390 971h.1M498 955h.1M756 966h.1M611 1002h.1M480 1045h.1"/></g><use href="#d4" class="dot"/></g>
      </svg>
    </section>
  </div>

  <footer class="status">
    <span class="message">0 entité sélectionnée dans la couche ocsol_sargard_wgs84</span>
    <span class="field mini"></span>
    <span class="field progress"></span>
    <span class="spacer"></span>
    <span class="coord"><span>0,0</span><i></i></span>
    <span class="stepper"><svg width="24" height="44" viewBox="0 0 24 44" fill="none" stroke="#333" stroke-width="2.500"><path d="M8 16l4-4 4 4M8 28l4 4 4-4"/></svg></span>
    <span class="check"><svg width="24" height="24" viewBox="0 0 24 24" fill="none" stroke="#c9c9c9" stroke-width="2"><path d="M6 14l4 6 8-16"/></svg></span>
    <span class="render">Rendu</span>
    <span class="field crs"><svg width="32" height="32" viewBox="0 0 32 32" fill="none" stroke="#777" stroke-width="2.500"><circle cx="16" cy="16" r="14" fill="#a5a5a5"/><ellipse cx="16" cy="16" rx="7" ry="14"/><ellipse cx="16" cy="16" rx="14" ry="7"/><path d="M12 12h8v8h-8z" fill="#ddd"/></svg><span>EPSG:4326</span></span>
    <span class="field msg"><svg width="34" height="32" viewBox="0 0 34 32"><ellipse cx="17" cy="14" rx="16" ry="13" fill="#666"/><path d="M18 24q6 2 11 7 0-4-2-8z" fill="#666"/></svg></span>
  </footer>
</main>

<section class="window chooser">
  <header class="titlebar">
    <div class="lights"><i></i><i></i><i></i></div>
    <span class="title">QgsWPSClient-2.0.17 Service Chooser</span>
  </header>
  <div class="chooser-body">
    <div class="label">Server Connections</div>
    <div class="group">
      <div class="combo"><span>zoo.dev.publicamundi.eu</span><i><svg width="33" height="41" viewBox="0 0 33 41" fill="none" stroke="#fff" stroke-width="3"><path d="M11 18l5-7 5 7M11 24l5 7 5-7"/></svg></i></div>
      <div class="row">
        <button class="btn w158">Connect</button><button class="btn w112">New</button><button class="btn w106">Edit</button><button class="btn w136">Delete</button><span class="spacer"></span><button class="btn w189">Bookmarks</button><button class="btn w271">Add default server</button>
      </div>
    </div>
    <div class="table">
      <div class="cols">
        <div class="thead"><div class="c1">Identifier<svg width="18" height="16" viewBox="0 0 18 16"><path d="M9 0l8 15H1z" fill="#707070"/></svg></div><div class="c2">Title</div><div class="c3">Abstract</div></div>
        <div class="tr"><div class="c1">SAGA.shapes_points.20</div><div class="c2">Snap Points to Grid</div><div class="c3">Moves all points to grid cell posi…</div></div>
        <div class="tr"><div class="c1">SAGA.shapes_points.3</div><div class="c2">Point Distances</div><div class="c3">Computes distances between p…</div></div>
        <div class="tr"><div class="c1">SAGA.shapes_points.4</div></div>
        <div class="tr"><div class="c1">SAGA.shapes_points.5</div></div>
        <div class="tr"><div class="c1">SAGA.shapes_points.6</div></div>
        <div class="tr"><div class="c1">SAGA.shapes_points.7</div></div>
        <div class="tr"><div class="c1">SAGA.shapes_points.8</div></div>
        <div class="tr"><div class="c1">SAGA.shapes_points.9</div></div>
        <div class="tr"><div class="c1">SAGA.shapes_polygons.1</div></div>
        <div class="tr"><div class="c1">SAGA.shapes_polygons.10</div></div>
        <div class="tr"><div class="c1">SAGA.shapes_polygons.11</div></div>
        <div class="tr"><div class="c1">SAGA.shapes_polygons.12</div></div>
        <div class="tr on"><div class="c1">SAGA.shapes_polygons.14</div></div>
        <div class="tr"><div class="c1">SAGA.shapes_polygons.15</div></div>
        <div class="tr"><div class="c1">SAGA.shapes_polygons.16</div></div>
        <div class="tr"><div class="c1">SAGA.shapes_polygons.17</div></div>
        <div class="tr"><div class="c1">SAGA.shapes_polygons.18</div></div>
        <div class="tr"><div class="c1">SAGA.shapes_polygons.19</div></div>
        <div class="tr"><div class="c1">SAGA.shapes_polygons.2</div></div>
        <div class="tr"><div class="c1">SAGA.shapes_polygons.20</div></div>
        <div class="tr"><div class="c1">SAGA.shapes_polygons.21</div></div>
        <div class="tr"><div class="c1">SAGA.shapes_polygons.22</div></div>
        <div class="tr"><div class="c1">SAGA.shapes_polygons.3</div></div>
      </div>
      <div class="track"></div>
    </div>
    <button class="btn about">about</button>
  </div>
</section>

<section class="window client">
  <header class="titlebar">
    <div class="lights"><i></i><i></i><i></i></div>
    <span class="title">QgsWPSClient-2.0.17</span>
  </header>
  <div class="client-body">
    <div class="pane">
      <div class="tabs"><span class="tab active">Process</span><span class="tab">Documentation</span></div>
      <div class="scroller">
        <div class="view">
          <div class="heading">SAGA.shapes_polygons.14</div>
          <div class="box short intro"><div class="desc">Intersect</div></div>
          <div class="box"><div class="desc"><em>[A]</em><em>Layer A</em><span>({'MimeType': u'text/xml', 'Encoding': u'utf-8', 'Schema': u''})</span></div>
            <div class="pick"><span>SAGA.shapes_polygons.</span><i><svg width="26" height="41" viewBox="0 0 26 41" fill="none" stroke="#fff" stroke-width="2.500"><path d="M11 16l6-6 6 6M11 25l6 6 6-6"/></svg></i></div></div>
          <div class="box"><div class="desc"><em>[B]</em><em>Layer B</em><span>({'MimeType': u'text/xml', 'Encoding': u'utf-8', 'Schema': u''})</span></div>
            <div class="pick focus"><span>ocsol_sargard_wgs84</span><i><svg width="26" height="41" viewBox="0 0 26 41" fill="none" stroke="#fff" stroke-width="2.500"><path d="M11 16l6-6 6 6M11 25l6 6 6-6"/></svg></i></div></div>
          <div class="box short"><div class="desc"><span>[SPLIT]</span><span>Split Parts</span></div><div class="input">true</div></div>
          <div class="box last"><div class="desc"><span>(Selected)</span><span>Process selected objects only</span></div><div class="tick"></div></div>
        </div>
        <div class="vbar"><i></i></div>
        <div class="hbar"><i></i></div>
        <div class="corner"></div>
      </div>
      <div class="actions"><button class="btn w375">Add Bookmark</button><span class="spacer"></span><button class="btn w176">Back</button><button class="btn run">Run</button></div>
    </div>
  </div>
</section>
</div>
</body>
</html>
```
FILE: styles.css
```
* { box-sizing: border-box; }
body { margin: 0; background: #fff; color: #000; font: 26px/26px "Liberation Sans", Arial, sans-serif; }
.defs { position: absolute; }
svg { display: block; flex: none; }
.desktop { position: relative; width: 2854px; height: 1632px; overflow: hidden; }
.spacer { flex: 1; }

/* main window */
.qgis { display: flex; flex-direction: column; width: 2854px; height: 1632px; background: #ebebeb; }
.titlebar { position: relative; display: flex; align-items: center; height: 38px; flex: none; background: #f6f6f6; border-bottom: 2px solid #d0d0d0; }
.titlebar .title { color: #b3b3b3; letter-spacing: .67px; white-space: nowrap; }
.lights { display: flex; gap: 17px; }
.lights i { width: 23px; height: 23px; border-radius: 50%; background: #dcdcdc; border: 1px solid #d0d0d0; }
.main-title .lights { padding-bottom: 4px; }
.main-title .title { margin-left: 1408px; color: #bbb; }
.toolbar { display: flex; height: 72px; flex: none; border-top: 2px solid #fff; border-bottom: 2px solid #ababab; background: linear-gradient(#ededed, #c6c6c6); }
.grip { width: 12px; margin: 10px 0; background: radial-gradient(circle at 3px 3px, #f6f6f6 2px, transparent 2.500px) 0 0/12px 12px, radial-gradient(circle at 9px 9px, #f6f6f6 2px, transparent 2.500px) 0 0/12px 12px; }
.grip.inner { width: 12px; margin: 10px 2px; }
.workspace { display: flex; height: 1390px; flex: none; }
.layerbar { width: 80px; padding-top: 12px; border-right: 2px solid #a8a8a8; background: linear-gradient(90deg, #ebebeb, #c6c6c6); }
.hgrip { display: block; width: 70px; height: 12px; margin-bottom: 6px; background: radial-gradient(circle at 3px 3px, #f6f6f6 2px, transparent 2.500px) 0 0/12px 12px, radial-gradient(circle at 9px 9px, #f6f6f6 2px, transparent 2.500px) 0 0/12px 12px; }
.docks { display: flex; flex-direction: column; width: 640px; }
.dock-head { display: flex; align-items: center; gap: 12px; height: 52px; padding: 0 6px 2px; border-bottom: 2px solid #a8a8a8; background: linear-gradient(#f0f0f0, #c6c6c6); flex: none; }
.dock-head.two { border-top: 2px solid #a0a0a0; height: 53px; padding-bottom: 2px; }
.dock-one { height: 329px; padding: 24px 0 0 24px; }
.stub-btn { height: 41px; border: 2px solid #bdbdbd; border-radius: 8px; background: #f6f6f6; }
.stub-group { height: 156px; margin-top: 63px; padding: 24px 0 0 24px; border: 2px solid #b8b8b8; border-radius: 8px; background: #e2e2e2; }
.stub-list { height: 70px; border: 2px solid #999; background: #f6f6f6; }
.stub-scroll { width: 60px; height: 12px; margin: 14px 0 0 2px; border: 2px solid #aaa; border-radius: 6px; background: #d0d0d0; }
.dock-tools { height: 74px; padding: 1px 0 0 10px; border-bottom: 2px solid #999; }
.toolbtn { display: flex; align-items: center; justify-content: center; width: 52px; height: 50px; padding-right: 4px; border: 2px solid #c0c0c0; }
.layers { flex: 1; margin-left: 2px; border-bottom: 2px solid #b0b0b0; background: #fff; }
.layer { height: 40px; padding: 7px 0 0 55px; }
.layer.picked { background: #cfcfcf; }
.layer i { display: block; width: 27px; height: 27px; border: 2px solid #bbb; border-radius: 6px; background: radial-gradient(circle, #777 3px, #f2f2f2 3px); }
.dock-tabs { display: flex; height: 42px; }
.frame { width: 208px; height: 22px; background: #e2e2e2; border-radius: 0 0 6px 6px; }
.segment { display: flex; height: 42px; margin-left: 5px; border: 2px solid #a8a8a8; border-radius: 8px; background: #fff; line-height: 36px; overflow: hidden; }
.segment span { padding: 0 24px; }
.segment .off { width: 145px; padding: 0 0 0 17px; background: #e6e6e6; color: #fff; text-shadow: 0 2px 1px #bbb, 1px 0 1px #ccc; }
.canvas { width: 2134px; border-top: 2px solid #8e8e8e; border-bottom: 2px solid #b0b0b0; background: #fff; overflow: hidden; }
.land { fill: #8b1616; stroke: #3a2020; stroke-width: 1.500px; vector-effect: non-scaling-stroke; }
.line { fill: none; stroke: #220606; stroke-width: 1.800px; stroke-linejoin: round; vector-effect: non-scaling-stroke; }
.ring, .dot { fill: none; stroke-linecap: round; }
#d1, #d2, #d3, #d4 { vector-effect: non-scaling-stroke; }
.ring { stroke: #14200c; stroke-width: 12px; }
.dot { stroke: #67cb41; stroke-width: 8.500px; }
.status { display: flex; flex: 1; align-items: flex-start; padding-top: 14px; background: linear-gradient(#ebebeb, #dcdcdc); white-space: nowrap; }
.message { width: 873px; margin: 6px 0 0 -4px; letter-spacing: -.05px; }
.field { height: 38px; border: 2px solid #c0c0c0; }
.mini { width: 38px; border-color: #aaa; margin-top: 2px; }
.progress { width: 597px; margin: 2px 0 0 195px; border-color: #aaa; }
.coord { display: flex; width: 176px; height: 42px; padding: 2px; border: 2px solid #aaa; background: #fff; line-height: 33px; }
.coord span { width: 86px; padding-left: 2px; }
.coord i { flex: 1; background: #e6e6e6; }
.stepper { width: 24px; height: 44px; margin-left: 8px; border-radius: 12px; background: #fff; box-shadow: 0 0 0 1.500px #bbb; }
.check { width: 28px; height: 28px; margin: 8px 0 0 15px; padding: 1px; border: 2px solid #bcbcbc; border-radius: 6px; background: #f4f4f4; }
.render { width: 81px; margin: 5px 0 0 8px; }
.crs { display: flex; width: 214px; height: 37px; margin: 2px 0 0 0; padding-left: 8px; }
.crs span { margin: 1px 0 0 8px; }
.msg { width: 76px; height: 37px; margin: 2px 42px 0 12px; padding-left: 7px; }

/* windows floating over the desktop */
.window { position: absolute; background: #ebebeb; overflow: visible; }
.btn { height: 42px; margin: 0; padding: 0 0 8px; border: 2px solid #c3c3c3; border-bottom-color: #a8a8a8; border-radius: 8px; background: #fff; color: #000; font: 26px/28px "Liberation Sans", Arial, sans-serif; flex: none; }
.w158 { width: 158px; } .w112 { width: 112px; } .w106 { width: 106px; } .w136 { width: 136px; } .w189 { width: 189px; } .w271 { width: 271px; } .w375 { width: 375px; } .w176 { width: 176px; }

.chooser { left: 144px; top: 0; width: 1372px; height: 1152px; border-radius: 0 0 10px 10px; box-shadow: 0 0 0 1px rgba(0,0,0,.14), 0 18px 46px rgba(0,0,0,.38); }
.chooser .lights { padding: 0 0 4px 16px; }
.chooser .title { margin: 0 0 2px 329px; }
.chooser-body { padding: 6px 40px 0; }
.label { padding-left: 15px; line-height: 30px; }
.group { height: 152px; margin-top: 10px; padding: 18px 19px 0 16px; border: 2px solid #b8b8b8; border-radius: 9px; background: #e3e3e3; }
.combo { display: flex; justify-content: space-between; height: 43px; padding-left: 15px; border: 2px solid #c3c3c3; border-bottom-color: #a4a4a4; border-radius: 8px; background: #fff; overflow: hidden; line-height: 31px; }
.combo i { margin-right: -2px; background: linear-gradient(#dedede, #cecece); }
.row { display: flex; gap: 12px; margin: 19px 0 0 2px; }
.row .spacer { margin: 0 -12px; }
.table { display: flex; height: 720px; margin-top: 52px; border: 2px solid #b4b4b4; border-top-color: #8e8e8e; background: #fff; overflow: hidden; }
.cols { width: 1258px; }
.track { flex: 1; border-left: 2px solid #e2e2e2; background: #fafafa; }
.thead { display: flex; height: 34px; padding-top: 1px; border-bottom: 2px solid #d0d0d0; line-height: 29px; }
.thead .c1 { display: flex; justify-content: space-between; padding: 0 11px 0 8px; }
.thead .c1 svg { margin-top: 6px; }
.thead .c2, .thead .c3 { border-left: 2px solid #ddd; padding-left: 8px; }
.c1 { width: 506px; padding-left: 50px; } .c2 { width: 334px; padding-left: 12px; } .c3 { padding-left: 12px; white-space: nowrap; }
.tr { display: flex; height: 30px; line-height: 26px; }
.tr.on { background: #cfcfcf; }
.about { display: block; width: 126px; margin: 48px 0 0 12px; }

.client { left: 562px; top: 374px; width: 1600px; height: 1244px; border-radius: 10px; box-shadow: 0 0 0 1px rgba(0,0,0,.14), 0 30px 64px rgba(0,0,0,.56); }
.client .titlebar { height: 44px; border-radius: 10px 10px 0 0; border-top: 2px solid #f6f6f6; border-bottom-color: #b1b1b1; background: linear-gradient(#ebebeb, #d2d2d2); }
.client .title { margin: 0 0 0 544px; color: #4a4a4a; }
.client .lights { padding-left: 16px; gap: 16px; }
.client .lights i { width: 24px; height: 24px; }
.client .lights i:nth-child(1) { background: #fc5b57; border-color: #df4744; }
.client .lights i:nth-child(2) { background: #fdbc40; border-color: #de9f34; }
.client .lights i:nth-child(3) { background: #34c84a; border-color: #27aa35; }
.client-body { padding: 48px 40px 0; }
.pane { height: 1112px; padding: 0 44px; border: 2px solid #dadada; border-top-color: #d2d2d2; border-radius: 9px; background: #e1e1e1; }
.tabs { display: flex; height: 40px; margin: -22px 0 0 532px; line-height: 35px; }
.tab { height: 40px; width: 219px; padding-left: 24px; border: 2px solid #c3c3c3; border-left: 0; border-bottom-color: #a8a8a8; border-radius: 0 8px 8px 0; background: #fff; }
.tab.active { width: 138px; padding-left: 20px; border: 0; border-bottom: 2px solid #1467ee; border-radius: 8px 0 0 8px; background: linear-gradient(#6bb3fa, #1880fd); color: #fff; line-height: 39px; -webkit-text-stroke: .4px #fff; }
.scroller { display: grid; grid-template: 869px 29px / 1394px 30px; width: 1428px; height: 902px; margin-top: 36px; border: 2px solid #b8b8b8; border-top-color: #8e8e8e; }
.view { overflow: hidden; padding-left: 24px; background: #ebebeb; }
.heading { height: 36px; padding-left: 16px; line-height: 22px; }
.box { display: flex; align-items: center; justify-content: space-between; width: 1420px; height: 130px; margin-bottom: 76px; border: 2px solid #b8b8b8; border-radius: 8px; background: #e3e3e3; }
.box.short { height: 104px; }
.box.intro { height: 103px; margin-bottom: 75px; }
.box.last { height: 130px; align-items: flex-start; }
.desc { padding: 0 0 4px 24px; white-space: nowrap; }
.intro .desc { padding-bottom: 6px; }
.desc > * { display: block; font-style: normal; }
.desc em { color: #f00; }
.box.last .desc { padding-top: 22px; }
.pick { display: flex; justify-content: space-between; width: 340px; height: 42px; margin: 0 44px 0 0; padding-left: 16px; border: 2px solid #c3c3c3; border-right: 0; border-bottom-color: #a8a8a8; border-radius: 8px; background: #fff; line-height: 31px; }
.pick i { width: 26px; margin: -2px 0; background: linear-gradient(#6bb3fa, #1880fd); }
.pick.focus { border-color: #a9c9ea; box-shadow: 0 0 0 2px #7db2ea; }
.input { width: 420px; height: 50px; margin-right: -26px; padding-left: 3px; border: 2px solid #b8b8b8; background: #fff; line-height: 43px; }
.tick { width: 28px; height: 28px; margin: 38px 21px 0 0; border: 2px solid #b8b8b8; border-radius: 4px; background: #fff; }
.vbar { border-left: 2px solid #e8e8e8; background: #fafafa; padding: 2px 5px 0 6px; }
.vbar i { display: block; height: 601px; width: 16px; border-radius: 8px; background: #c1c1c1; }
.hbar { border-top: 2px solid #e8e8e8; background: #fafafa; padding: 5px 3px; }
.hbar i { display: block; width: 1330px; height: 17px; border-radius: 8px; background: #c1c1c1; }
.corner { background: #fff; border: 2px solid #e8e8e8; border-width: 2px 0 0 2px; }
.actions { display: flex; width: 1380px; margin: 44px 0 0 24px; }
.run { width: 176px; margin-left: 28px; border-color: #4a9cf8; border-bottom-color: #1467ee; background: linear-gradient(#6bb3fa, #1880fd); }
```
